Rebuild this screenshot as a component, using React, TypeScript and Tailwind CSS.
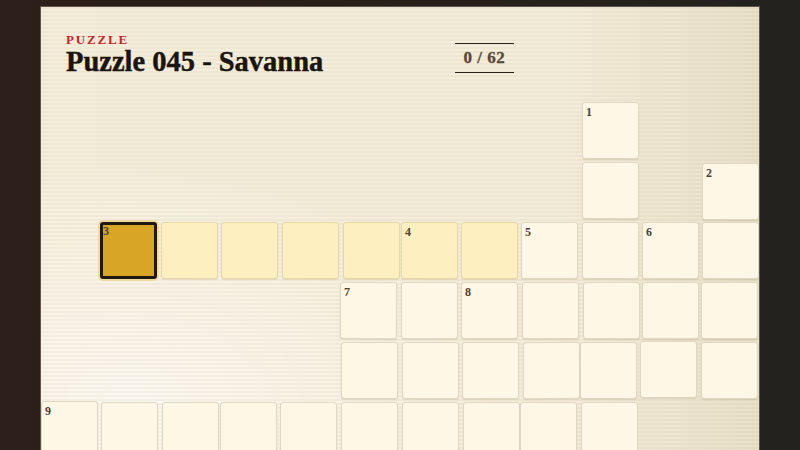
import { Fragment } from 'react'

// grid rows: '.' empty, 'c' cell, 'h' highlighted (active word), 's' selected
const ROWS = [
  '.........c..',
  '.........c.c',
  '.shhhhhhcccc',
  '.....ccccccc',
  '.....ccccccc',
  'cccccccccc..',
]

const NUMBERS: Record<string, number> = {
  '0-9': 1,
  '1-11': 2,
  '2-1': 3,
  '2-6': 4,
  '2-8': 5,
  '2-10': 6,
  '3-5': 7,
  '3-7': 8,
  '5-0': 9,
}

// hand-placed look: small per-cell nudges [dx, dy, rotate]
const NUDGE: Record<string, [number, number, number]> = {
  '0-9': [1, 0, 0],
  '1-9': [1, 0, 0],
  '1-11': [1, 1, 0],
  '2-1': [-1, 0, 0],
  '2-4': [1, 0, 0],
  '2-5': [2, 0, 0],
  '2-9': [1, 0, 0],
  '2-10': [1, 0, 0],
  '2-11': [1, 0, 0],
  '3-5': [-1, 0, 0.3],
  '3-8': [1, 0, 0],
  '3-9': [2, 0, 0],
  '3-10': [1, 0, 0],
  '4-6': [1, 0, 0],
  '4-7': [1, 0, 0],
  '4-8': [2, 0, -0.3],
  '4-9': [-1, 0, 0],
  '4-10': [-1, -1, 0],
  '5-0': [0, -1, 0],
  '5-2': [1, 0, 0],
  '5-3': [-1, 0, 0],
  '5-4': [-1, 0, 0],
  '5-6': [1, 0, 0],
  '5-7': [2, 0, 0],
  '5-8': [-1, 0, 0],
}

function Cell({ kind, num, id }: { kind: string; num?: number; id: string }) {
  const n = NUDGE[id]
  const style = n ? { transform: `translate(${n[0]}px, ${n[1]}px) rotate(${n[2]}deg)` } : undefined
  const tone =
    kind === 's'
      ? 'bg-[#d9a527] border-[3px] border-[#21180f] shadow-[0_0_0_2px_rgba(240,210,130,0.7)]'
      : kind === 'h'
        ? 'bg-[#fdefc0] border border-[#e8d7a4] shadow-[0_1px_1px_rgba(120,90,40,0.12)]'
        : 'bg-[#fff7e6] border border-[#e0d6c2] shadow-[0_1px_1px_rgba(90,70,40,0.12)]'
  return (
    <div className={`relative h-[57px] w-[57px] rounded-[3px] ${tone}`} style={style}>
      {num !== undefined && (
        <span
          className={`absolute font-['Liberation_Serif',serif] text-[12px] font-bold leading-none text-[#4a3f33] ${
            kind === 's' ? 'left-[0px] top-[0px]' : 'left-[3px] top-[3px]'
          }`}
        >
          {num}
        </span>
      )}
    </div>
  )
}

export default function App() {
  return (
    <div className="h-[450px] w-[800px] overflow-hidden bg-[linear-gradient(90deg,#2d1f1a_0%,#2a201b_40%,#23221f_100%)] pt-[7px]">
      <div className="relative ml-[41px] h-[460px] w-[718px] overflow-hidden shadow-[0_0_0_1px_rgba(255,250,235,0.25)] [background-image:repeating-linear-gradient(180deg,rgba(160,130,80,0.07)_0px,rgba(160,130,80,0.07)_2px,transparent_2px,transparent_4px),radial-gradient(ellipse_at_12%_86%,rgba(255,255,255,0.6),transparent_42%),linear-gradient(90deg,#f5eedc_0%,#f4edda_72%,#e9e0ca_100%)]">
        <header className="flex h-[95px] items-start pl-[25px] pt-[26px]">
          <div className="w-[389px]">
            <div className="font-['Liberation_Serif',serif] text-[13px] font-bold uppercase leading-none tracking-[0.14em] text-[#c0282d]">
              Puzzle
            </div>
            <h1 className="mt-[0px] font-['Liberation_Serif',serif] text-[28.5px] font-bold leading-[32px] text-[#1a1510] [-webkit-text-stroke:0.4px_#1a1510]">
              Puzzle 045 - Savanna
            </h1>
          </div>
          <div className="mt-[10px] flex h-[30px] w-[59px] items-center justify-center border-y border-[#2a1f18] font-['Liberation_Serif',serif] text-[17px] font-bold tracking-[0.03em] text-[#54493d] [-webkit-text-stroke:0.3px_#54493d]">
            0 / 62
          </div>
        </header>

        <div className="grid grid-cols-[repeat(12,57px)] gap-[3px]">
          {ROWS.map((row, r) => (
            <Fragment key={r}>
              {row.split('').map((k, c) => {
                const id = `${r}-${c}`
                return k === '.' ? (
                  <div key={id} className="h-[57px] w-[57px]" />
                ) : (
                  <Cell key={id} id={id} kind={k} num={NUMBERS[id]} />
                )
              })}
            </Fragment>
          ))}
        </div>
      </div>
    </div>
  )
}
